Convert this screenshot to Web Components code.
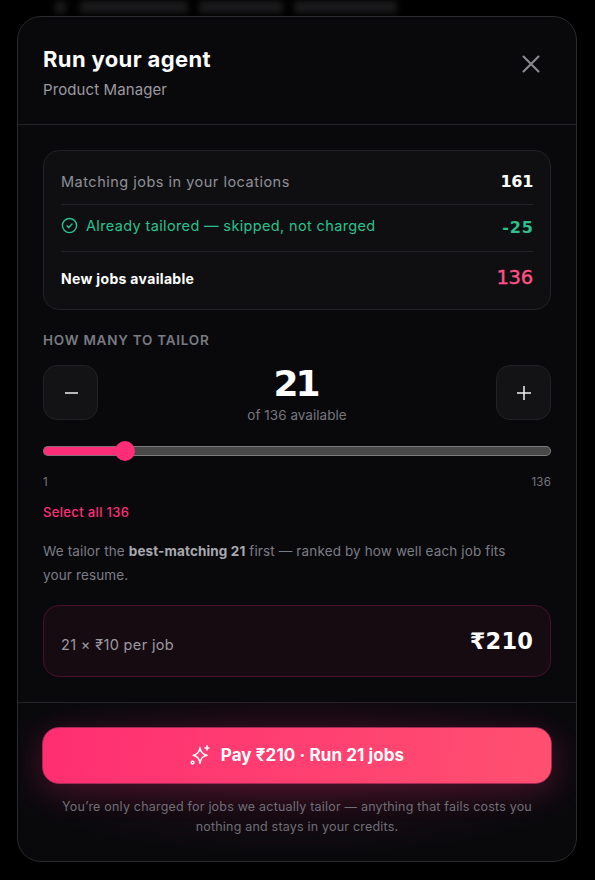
<!DOCTYPE html>
<html lang="en">
<head>
<meta charset="utf-8">
<title>Run your agent</title>
<style>
  html, body { margin: 0; height: 880px; overflow: hidden; background: #000; }
  body { font-family: Inter, "Noto Sans", sans-serif; color: #fff; }
</style>
</head>
<body>
<agent-modal>
  <modal-header slot="header" title="Run your agent" subtitle="Product Manager"></modal-header>

  <stats-card>
    <stat-row label="Matching jobs in your locations" value="161"></stat-row>
    <stat-row tone="green" label="Already tailored — skipped, not charged" value="-25"></stat-row>
    <stat-row tone="total" label="New jobs available" value="136"></stat-row>
  </stats-card>

  <qty-picker value="21" max="136"></qty-picker>

  <fit-note>We tailor the <b>best-matching 21</b> first — ranked by how well each job fits<br>your resume.</fit-note>

  <price-box label="21 × ₹10 per job" total="₹210"></price-box>

  <pay-footer slot="footer" action="Pay ₹210 · Run 21 jobs">You’re only charged for jobs we actually tailor — anything that fails costs you nothing and stays in your credits.</pay-footer>
</agent-modal>

<script>
// Small helper: every element sets its markup in an open shadow root
class ShadowEl extends HTMLElement {
  connectedCallback() {
    if (!this.shadowRoot) this.attachShadow({ mode: "open" });
    this.shadowRoot.innerHTML = this.markup();
  }
  attr(name) { return this.getAttribute(name) ?? ""; }
}

// The big dialog box, with the blurred page peeking out above it
class AgentModal extends ShadowEl {
  markup() {
    return `
      <style>
        :host { display: block; position: relative; width: 560px; height: 846px; margin: 16px 0 0 17px; }
        .behind { position: absolute; left: 38px; top: -15px; display: flex; gap: 11px; filter: blur(3px); }
        .behind i { display: block; height: 12px; background: #1a1a1c; }
        .box { position: relative; box-sizing: border-box; height: 846px; display: flex; flex-direction: column;
               background: #09090c; border: 1px solid #2a2a2e; border-radius: 24px; overflow: hidden; }
        .body { box-sizing: border-box; height: 578px; padding: 25px 25px 0; border-bottom: 1px solid #242428; }
      </style>
      <div class="behind" aria-hidden="true">
        <i style="width:11px;margin-right:3px"></i><i style="width:108px"></i><i style="width:84px"></i><i style="width:103px"></i>
      </div>
      <div class="box">
        <slot name="header"></slot>
        <div class="body"><slot></slot></div>
        <slot name="footer"></slot>
      </div>`;
  }
}

class ModalHeader extends ShadowEl {
  markup() {
    return `
      <style>
        :host { display: flex; justify-content: space-between; box-sizing: border-box; height: 108px;
                padding: 28px 33px 0 25px; border-bottom: 1px solid #242428; }
        h2 { margin: 0; font: 700 22px/28px Inter, sans-serif; letter-spacing: .37px; color: #fff; }
        p { margin: 7px 0 0; font: 400 15px/20px Inter, sans-serif; letter-spacing: .1px; color: #9a9aa0; }
        svg { display: block; margin-top: 7px; }
      </style>
      <div><h2>${this.attr("title")}</h2><p>${this.attr("subtitle")}</p></div>
      <svg width="24" height="24" viewBox="0 0 24 24" fill="none" stroke="#8a8a90" stroke-width="2.1" stroke-linecap="round">
        <path d="M4.500 4.500L19.500 19.500M19.500 4.500L4.500 19.500"/>
      </svg>`;
  }
}

class StatsCard extends ShadowEl {
  markup() {
    return `
      <style>
        :host { display: block; box-sizing: border-box; height: 160px; padding: 9px 17px 0;
                background: #0f0f12; border: 1px solid #232327; border-radius: 16px; }
      </style>
      <slot></slot>`;
  }
}

class StatRow extends ShadowEl {
  markup() {
    const tone = this.attr("tone");
    const check = tone === "green"
      ? `<svg width="17" height="17" viewBox="0 0 24 24" fill="none" stroke="currentColor" stroke-width="2" stroke-linecap="round" stroke-linejoin="round"><circle cx="12" cy="12" r="10"/><path d="M8.500 12.500l2.500 2.500 4.500-5"/></svg>`
      : "";
    return `
      <style>
        :host { display: flex; justify-content: space-between; align-items: center; height: 44px;
                border-bottom: 1px solid #232327; color: #8f8f96; font: 400 14.5px Inter, sans-serif; letter-spacing: .5px; }
        :host([tone="green"]) { height: 46px; color: #2cc08c; letter-spacing: .36px; }
        :host([tone="total"]) { height: 58px; border-bottom: 0; color: #fff; font-weight: 700; font-size: 14px; letter-spacing: .33px; }
        .l { display: flex; align-items: center; gap: 8px; margin-top: -2px; }
        :host([tone="green"]) .l { margin-top: -6px; }
        :host([tone="total"]) .l { margin-top: -6px; }
        svg { display: block; }
        .v { font: 700 16px/20px "DejaVu Sans", sans-serif; letter-spacing: -.3px; color: #fff; }
        :host([tone="green"]) .v { color: #2cc08c; letter-spacing: .9px; margin-right: -.9px; }
        :host([tone="total"]) .v { font-size: 19.500px; letter-spacing: -.2px; font-weight: 400; -webkit-text-stroke: .4px; color: #ff5088; margin-top: -6px; }
      </style>
      <span class="l">${check}${this.attr("label")}</span><span class="v">${this.attr("value")}</span>`;
  }
}

// Stepper, slider and the select-all link
class QtyPicker extends ShadowEl {
  markup() {
    const value = this.attr("value"), max = this.attr("max");
    return `
      <style>
        :host { display: block; padding-top: 21px; }
        h3 { margin: 0; font: 600 13.500px/18px Inter, sans-serif; letter-spacing: .75px; color: #7a7a82; }
        .stepper { display: flex; justify-content: space-between; margin-top: 16px; }
        button { box-sizing: border-box; width: 55px; height: 55px; padding: 0; display: grid; place-items: center;
                 background: #131316; border: 1px solid #222226; border-radius: 14px; }
        .count { text-align: center; }
        .n { font: 700 36px/38px "DejaVu Sans", sans-serif; letter-spacing: -3px; color: #fff; margin-right: 3px; }
        .of { font: 400 13.500px/18px Inter, sans-serif; letter-spacing: .03px; color: #77777e; margin-top: 3px; }
        .track { display: flex; align-items: center; height: 20px; margin-top: 17px; }
        .fill { box-sizing: border-box; width: 82px; height: 10px; background: #ff2d78; border: 1px solid #8c6a78; border-right: 0; border-radius: 5px 0 0 5px; flex: none; }
        .thumb { width: 20px; height: 20px; margin: 0 -10px; position: relative; border-radius: 50%; background: #ff2d78; flex: none; }
        .rest { flex: 1; box-sizing: border-box; height: 10px; background: #484848; border: 1px solid #7b7b7b; border-left: 0; border-radius: 0 5px 5px 0; }
        .ends { display: flex; justify-content: space-between; margin-top: 13px; font: 400 11.500px/16px Inter, sans-serif; letter-spacing: .2px; color: #76767c; }
        .all { margin-top: 13px; font: 500 13px/18px Inter, sans-serif; letter-spacing: .35px; color: #ff2d78; }
      </style>
      <h3>HOW MANY TO TAILOR</h3>
      <div class="stepper">
        <button aria-label="Less"><svg width="16" height="16" viewBox="0 0 16 16" stroke="#f0f0f0" stroke-width="1.500"><path d="M2 8H15"/></svg></button>
        <div class="count"><div class="n">${value}</div><div class="of">of ${max} available</div></div>
        <button aria-label="More"><svg width="16" height="16" viewBox="0 0 16 16" stroke="#f0f0f0" stroke-width="1.500"><path d="M2 8H16M9 1V15"/></svg></button>
      </div>
      <div class="track"><div class="fill"></div><div class="thumb"></div><div class="rest"></div></div>
      <div class="ends"><span>1</span><span>${max}</span></div>
      <div class="all">Select all ${max}</div>`;
  }
}

class FitNote extends ShadowEl {
  markup() {
    return `
      <style>
        :host { display: block; margin-top: 18px; font: 400 13.500px/24px Inter, sans-serif; letter-spacing: .13px; color: #7c7c84; }
        ::slotted(b) { color: #a8a8ae; font-weight: 700; }
      </style>
      <slot></slot>`;
  }
}

class PriceBox extends ShadowEl {
  markup() {
    return `
      <style>
        :host { display: flex; justify-content: space-between; align-items: flex-start; box-sizing: border-box;
                height: 72px; margin-top: 18px; padding: 20px 17px 0; background: #170b12;
                border: 1px solid #47112b; border-radius: 16px; }
        .l { margin-top: 9px; font: 400 14.500px/20px Inter, sans-serif; letter-spacing: .35px; color: #9b9aa0; }
        .t { font: 700 22.500px/30px "DejaVu Sans", sans-serif; letter-spacing: .15px; color: #fff; }
      </style>
      <span class="l">${this.attr("label")}</span><span class="t">${this.attr("total")}</span>`;
  }
}

class PayFooter extends ShadowEl {
  markup() {
    return `
      <style>
        :host { display: block; flex: 1; padding: 24px 25px 0; text-align: center;
                background: radial-gradient(ellipse 320px 90px at 50% 62px, rgba(255,45,120,.13), rgba(255,45,120,0)); }
        button { box-sizing: border-box; width: 510px; height: 57px; margin-left: -1px; padding: 0 0 2px;
                 display: flex; align-items: center; justify-content: center; gap: 11px;
                 color: #fff; font: 700 17px Inter, sans-serif; letter-spacing: .1px;
                 background: linear-gradient(100deg, #ff2e72, #ff5070); border: 1px solid #a62a55; border-radius: 17px;
                 box-shadow: 0 8px 30px rgba(255,45,120,.22); }
        svg { display: block; }
        p { width: 490px; margin: 13px auto 0; font: 400 12.500px/20px Inter, sans-serif; letter-spacing: .2px; color: #6f6f77; }
      </style>
      <button>
        <svg width="20" height="20" viewBox="0 0 20 20" fill="none" stroke="#fff" stroke-width="1.500" stroke-linejoin="round" stroke-linecap="round">
          <path d="M10 2.500C10.500 7.300 12.300 9.300 17 10.300C12.300 11.300 10.500 13.300 10 18.500C9.500 13.300 7.700 11.300 3.300 10.300C7.700 9.300 9.500 7.300 10 2.500Z"/>
          <path d="M17 .8V5M15 2.900H19"/>
          <circle cx="2.600" cy="17.600" r="1.400"/>
        </svg>
        <span>${this.attr("action")}</span>
      </button>
      <p><slot></slot></p>`;
  }
}

customElements.define("agent-modal", AgentModal);
customElements.define("modal-header", ModalHeader);
customElements.define("stats-card", StatsCard);
customElements.define("stat-row", StatRow);
customElements.define("qty-picker", QtyPicker);
customElements.define("fit-note", FitNote);
customElements.define("price-box", PriceBox);
customElements.define("pay-footer", PayFooter);
</script>
</body>
</html>
